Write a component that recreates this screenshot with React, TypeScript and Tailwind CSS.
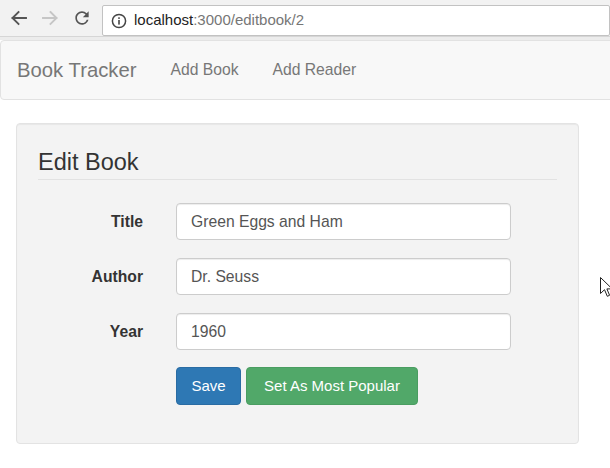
import React from "react";

function BackIcon({ color }: { color: string }) {
  return (
    <svg width="18" height="18" viewBox="0 0 18 18" fill="none">
      <path d="M16 9H2.5M8.5 3L2.5 9L8.5 15" stroke={color} strokeWidth="1.9" strokeLinecap="square" />
    </svg>
  );
}

function ForwardIcon({ color }: { color: string }) {
  return (
    <svg width="18" height="18" viewBox="0 0 18 18" fill="none">
      <path d="M2 9H15.5M9.5 3L15.5 9L9.5 15" stroke={color} strokeWidth="1.9" strokeLinecap="square" />
    </svg>
  );
}

function ReloadIcon() {
  return (
    <svg width="20" height="20" viewBox="0 0 24 24">
      <path
        fill="#555"
        d="M17.65 6.35A7.958 7.958 0 0 0 12 4c-4.42 0-7.99 3.58-7.99 8s3.57 8 7.99 8c3.73 0 6.84-2.55 7.73-6h-2.08A5.99 5.99 0 0 1 12 18c-3.31 0-6-2.690-6-6s2.690-6 6-6c1.66 0 3.14.69 4.22 1.78L13 11h7V4l-2.35 2.35z"
      />
    </svg>
  );
}

function InfoIcon() {
  return (
    <svg width="16" height="16" viewBox="0 0 16 16" fill="none">
      <circle cx="8" cy="8" r="6.6" stroke="#444" strokeWidth="1.5" />
      <rect x="7.2" y="7" width="1.6" height="4.6" fill="#444" />
      <rect x="7.2" y="4.3" width="1.6" height="1.6" fill="#444" />
    </svg>
  );
}

function Cursor() {
  return (
    <svg width="14" height="22" viewBox="0 0 14 22" className="absolute left-[600px] top-[277px]">
      <path d="M0.5 0.5V16.5L4.5 12.7L7.3 19.3L9.6 18.3L6.9 11.9H12.2Z" fill="#fff" stroke="#222" strokeWidth="1" />
    </svg>
  );
}

function Row({ label, value }: { label: string; value: string }) {
  return (
    <div className="flex items-center h-[37px]">
      <div className="w-[105px] text-right font-bold text-[15.7px] text-[#333]">{label}</div>
      <input
        readOnly
        value={value}
        className="ml-[33px] w-[335px] h-[37px] border border-[#cccccc] rounded-[4px] bg-white px-[14px] text-[15.7px] text-[#555] shadow-[inset_0_1px_1px_rgba(0,0,0,0.075)] outline-none font-['Liberation_Sans',Arial,sans-serif]"
      />
    </div>
  );
}

export default function App() {
  return (
    <div className="w-[610px] h-[468px] bg-white relative overflow-hidden font-['Liberation_Sans',Arial,sans-serif]">
      {/* Browser toolbar */}
      <div className="h-[37px] bg-[#f2f2f2] border-b border-[#d6d6d6] flex items-start">
        <div className="flex items-center h-[36px] pl-[10px]">
          <BackIcon color="#555" />
          <div className="ml-[13px]">
            <ForwardIcon color="#c6c6c6" />
          </div>
          <div className="ml-[13px]">
            <ReloadIcon />
          </div>
        </div>
        <div className="ml-[10px] mt-[5px] w-[520px] h-[31px] bg-white border border-[#c2c2c2] rounded-[2px] flex items-center pl-[8px]">
          <InfoIcon />
          <span className="ml-[7px] text-[15px] text-[#222]">
            localhost<span className="text-[#767676]">:3000/editbook/2</span>
          </span>
        </div>
      </div>
      <div className="h-[3px] bg-[#ececec]" />

      {/* Navbar */}
      <div className="h-[60px] w-[620px] bg-[#f8f8f8] border border-[#e2e2e2] rounded-[4px] flex items-center">
        <span className="pl-[16px] text-[20.3px] text-[#777]">Book Tracker</span>
        <span className="ml-[34px] text-[15.7px] text-[#777]">Add Book</span>
        <span className="ml-[34px] text-[15.7px] text-[#777]">Add Reader</span>
      </div>

      {/* Card */}
      <div className="mt-[23px] ml-[16px] w-[563px] h-[321px] border border-[#e3e3e3] bg-[#f3f3f3] rounded-[4px] px-[21px] pt-[24px] shadow-[inset_0_1px_1px_rgba(0,0,0,0.05)]">
        <div className="text-[23.5px] leading-[28px] text-[#333] pb-[3px] border-b border-[#e2e2e2]">Edit Book</div>
        <div className="mt-[23px] flex flex-col gap-[18px]">
          <Row label="Title" value="Green Eggs and Ham" />
          <Row label="Author" value="Dr. Seuss" />
          <Row label="Year" value="1960" />
        </div>
        <div className="mt-[17px] ml-[138px] flex">
          <div className="w-[65px] h-[38px] bg-[#2e78b4] border border-[#2a6ca3] rounded-[4px] text-white text-[15px] flex items-center justify-center">
            Save
          </div>
          <div className="ml-[5px] w-[172px] h-[38px] bg-[#51a869] border border-[#4a9d61] rounded-[4px] text-white text-[15px] flex items-center justify-center">
            Set As Most Popular
          </div>
        </div>
      </div>

      <Cursor />
    </div>
  );
}
